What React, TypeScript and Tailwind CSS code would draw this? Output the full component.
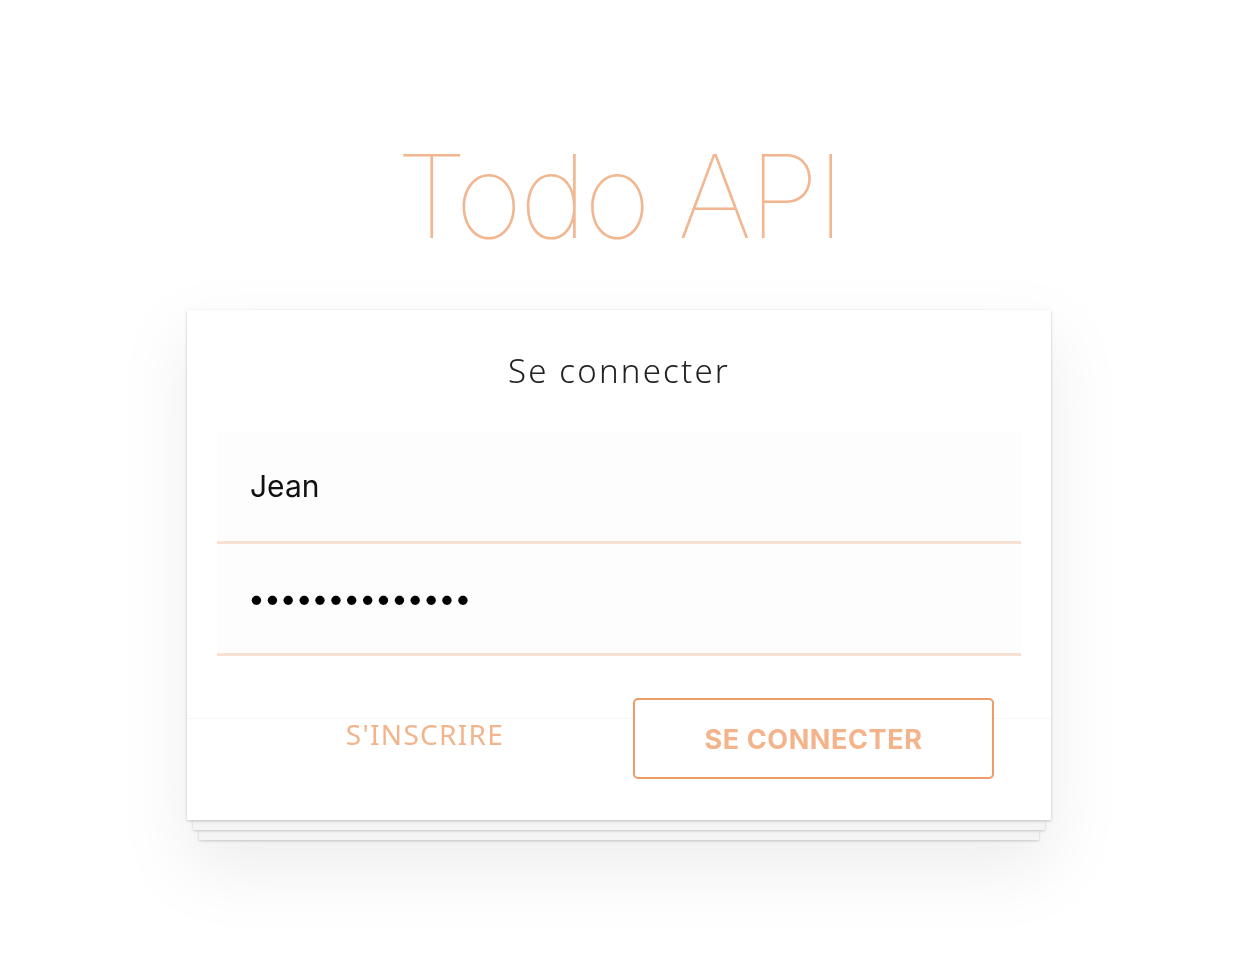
import { useState } from "react";

export default function App() {
  const [username, setUsername] = useState("Jean");
  const [password, setPassword] = useState("motdepasse1234");

  return (
    <div className="min-h-[968px] w-full bg-white flex flex-col items-center" style={{ fontFamily: "Inter, 'Noto Sans', sans-serif" }}>
      <h1 className="mt-[138px] ml-[4px] text-[116px] leading-[1] font-thin text-[#f2b790] tracking-[-3px]">Todo API</h1>

      <div className="mt-[56px] ml-[4px] w-[864px] drop-shadow-[0_28px_34px_rgba(0,0,0,0.07)]">
        <div className="relative z-10 bg-white shadow-[0_1px_3px_rgba(0,0,0,0.22)]">
          <h2 className="pt-[36px] text-center text-[33px] font-light text-[#222] tracking-[2.2px]" style={{ fontFamily: "'Noto Sans', sans-serif" }}>
            Se connecter
          </h2>

          <form className="mt-[36px] px-[30px] flex flex-col" onSubmit={(e) => e.preventDefault()}>
            <input
              type="text"
              value={username}
              onChange={(e) => setUsername(e.target.value)}
              className="h-[112px] w-full bg-[#fdfdfd] border-b-[3px] border-[#f7e1d2] px-[33px] text-[30px] text-[#111] focus:outline-none"
            />
            <input
              type="password"
              value={password}
              onChange={(e) => setPassword(e.target.value)}
              className="h-[112px] w-full bg-[#fdfdfd] border-b-[3px] border-[#f7e1d2] pl-[31px] pr-[33px] text-[30px] text-black tracking-[-1px] focus:outline-none"
            />
          </form>

          <div className="mt-[62px] border-t border-[#f8f8f8] h-[102px] flex pl-[30px] pr-[57px]">
            <div className="flex-1 flex justify-center">
              <button type="button" className="-mt-[2px] text-[28px] text-[#f2b48c] uppercase tracking-[1.3px] h-[34px] leading-[34px]" style={{ fontFamily: "'Noto Sans', sans-serif" }}>
                S'inscrire
              </button>
            </div>
            <button
              type="submit"
              className="-mt-[21px] h-[81px] w-[361px] pt-[5px] border-2 border-[#ef9b68] rounded-[5px] bg-white text-[27px] font-bold text-[#f3b48b] tracking-[0.6px] uppercase"
            >
              Se connecter
            </button>
          </div>
        </div>
        <div className="relative z-[5] mx-[6px] h-[10px] bg-[#f4f4f4] shadow-[0_1px_3px_rgba(0,0,0,0.2)]" />
        <div className="mx-[12px] h-[10px] bg-[#f4f4f4] shadow-[0_1px_3px_rgba(0,0,0,0.2)]" />
      </div>
    </div>
  );
}
